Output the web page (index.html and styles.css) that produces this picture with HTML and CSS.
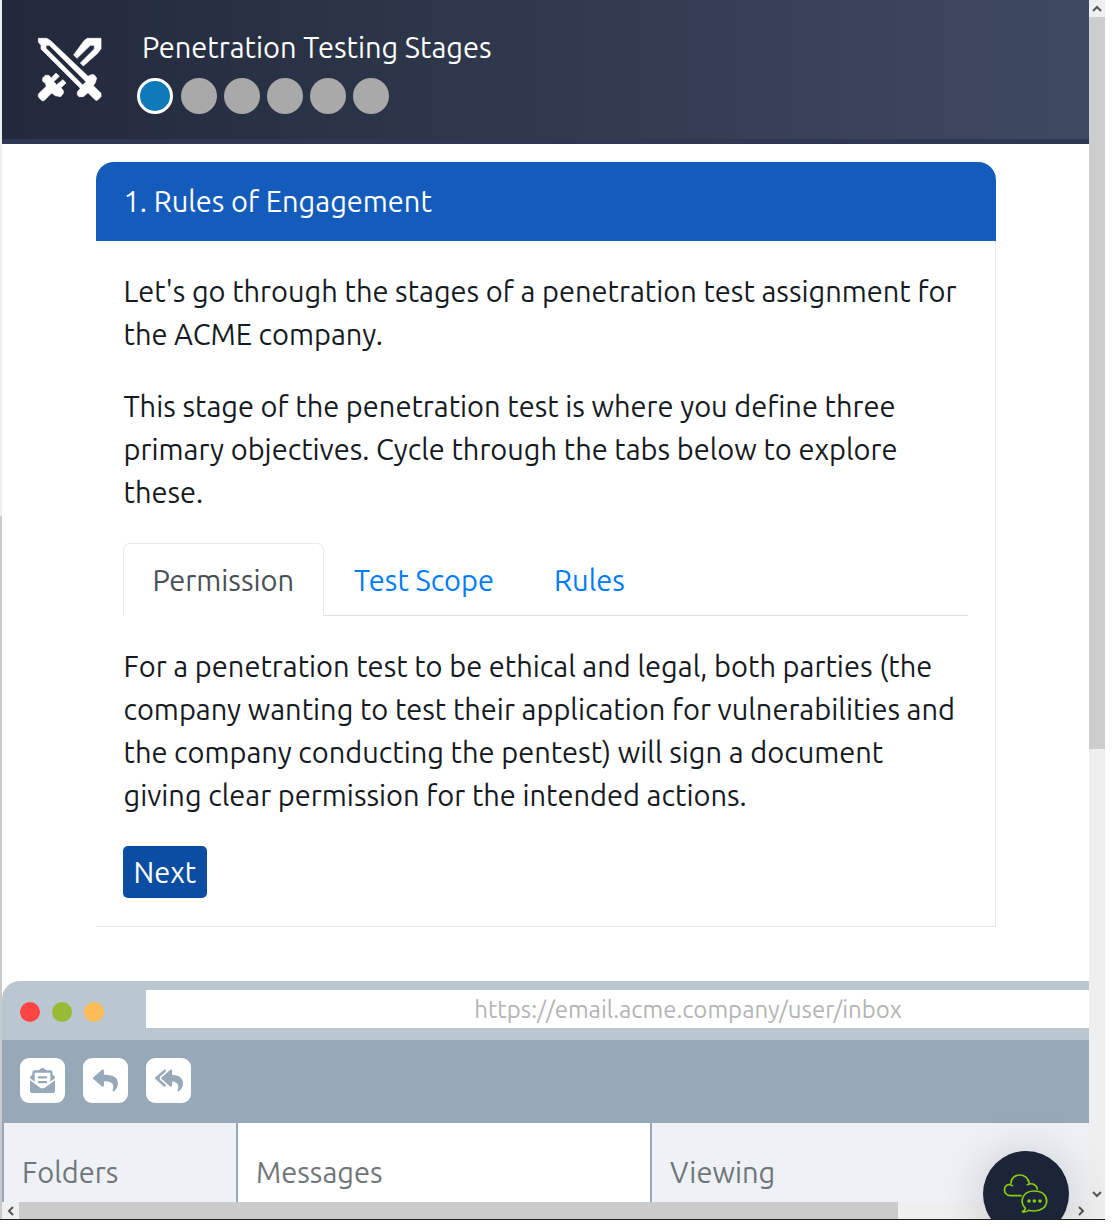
FILE: index.html
```html
<!DOCTYPE html>
<html lang="en">
<head>
<meta charset="utf-8">
<title>Penetration Testing Stages</title>
<link rel="stylesheet" href="styles.css">
</head>
<body>
<div class="frame">
  <div class="outer-track"><div class="outer-thumb"></div></div>
  <div class="view">
    <header class="banner">
      <svg class="swords" viewBox="0 0 216 216" fill="#fff" stroke="#fff" stroke-width="2" aria-hidden="true">
        <path fill-rule="evenodd" d="M13 13H38L50 20L162 127L172 122L180 122L188 132L184 146L178 155L201 178V188L190 199H185L162 176L148 188H135L130 182V174L139 163L21 45V34L13 24ZM36 34V43L146 153L156 143L46 34Z"/>
        <path d="M160 13H201V44L191 58L148 96L139 87L181 45V34H169L129 73L119 63L150 20Z"/>
        <path d="M66 117L76 127L59 143L68 152L87 137L96 147L81 161L88 170V178L80 188L64 185L53 177L30 200H24L13 189V180L37 157L34 148L26 142V132L34 124H44L52 132Z"/>
      </svg>
      <div class="banner-text">
        <h1 class="title">Penetration Testing Stages</h1>
        <ol class="steps">
          <li class="step step-current" aria-current="step"></li>
          <li class="step"></li>
          <li class="step"></li>
          <li class="step"></li>
          <li class="step"></li>
          <li class="step"></li>
        </ol>
      </div>
    </header>

    <section class="card">
      <h2 class="card-head">1. Rules of Engagement</h2>
      <div class="card-body">
        <p class="copy">Let's go through the stages of a penetration test assignment for the ACME company.</p>
        <p class="copy">This stage of the penetration test is where you define three primary objectives. Cycle through the tabs below to explore these.</p>
        <nav class="tabs">
          <a class="tab tab-active" href="#permission">Permission</a>
          <a class="tab" href="#scope">Test Scope</a>
          <a class="tab" href="#rules">Rules</a>
        </nav>
        <p class="copy" id="permission">For a penetration test to be ethical and legal, both parties (the company wanting to test their application for vulnerabilities and the company conducting the pentest) will sign a document giving clear permission for the intended actions.</p>
        <button class="next" type="button">Next</button>
      </div>
    </section>

    <section class="mail">
      <div class="address-bar">
        <div class="lights">
          <span class="light light-red"></span>
          <span class="light light-green"></span>
          <span class="light light-amber"></span>
        </div>
        <input class="url" type="text" aria-label="Address" value="https://email.acme.company/user/inbox" readonly>
      </div>
      <div class="toolbar">
        <button class="tool" type="button" aria-label="Open message"><svg viewBox="0 0 512 512"><path d="M176 216h160c8.84 0 16-7.16 16-16v-16c0-8.84-7.16-16-16-16H176c-8.84 0-16 7.16-16 16v16c0 8.84 7.16 16 16 16zm-16 80c0 8.84 7.16 16 16 16h160c8.84 0 16-7.16 16-16v-16c0-8.84-7.16-16-16-16H176c-8.84 0-16 7.16-16 16v16zm96 121.13c-16.42 0-32.84-5.06-46.86-15.19L0 250.86V464c0 26.51 21.49 48 48 48h416c26.51 0 48-21.49 48-48V250.86L302.86 401.94c-14.02 10.12-30.44 15.19-46.86 15.19zm237.61-254.18c-8.85-6.94-17.24-13.47-29.61-22.81V96c0-26.51-21.49-48-48-48h-77.55c-3.04-2.2-5.87-4.26-9.04-6.56C312.6 29.17 279.2-.35 256 0c-23.2-.35-56.59 29.17-73.41 41.44-3.17 2.3-6 4.36-9.04 6.56H96c-26.51 0-48 21.49-48 48v44.14c-12.37 9.33-20.76 15.87-29.61 22.81A47.995 47.995 0 0 0 0 200.72v10.65l96 69.35V96h320v184.72l96-69.35v-10.65c0-14.74-6.78-28.67-18.39-37.77z"/></svg></button>
        <button class="tool" type="button" aria-label="Reply"><svg viewBox="0 0 512 512"><path d="M8.309 189.836L184.313 37.851C199.719 24.546 224 35.347 224 56.015v80.053c160.629 1.839 288 34.032 288 186.258 0 61.441-39.581 122.309-83.333 154.132-13.653 9.931-33.111-2.533-28.077-18.631 45.344-145.012-21.507-183.51-176.59-185.742V360c0 20.7-24.3 31.453-39.687 18.164l-176.004-152c-11.071-9.562-11.086-26.753 0-36.328z"/></svg></button>
        <button class="tool" type="button" aria-label="Reply to all"><svg class="wide" viewBox="0 0 576 512"><path d="M136.309 189.836L312.313 37.851C327.72 24.546 352 35.348 352 56.015v82.763c129.182 10.231 224 52.212 224 183.548 0 61.441-39.582 122.309-83.333 154.132-13.653 9.931-33.111-2.533-28.077-18.631 38.512-123.162-3.922-169.482-112.59-182.015v84.175c0 20.701-24.3 31.453-39.687 18.164L136.309 226.164c-11.071-9.561-11.086-26.753 0-36.328zm-128 36.328L184.313 378.15C199.7 391.439 224 380.687 224 359.986v-15.818l-108.606-93.785A55.96 55.96 0 0 1 96 207.998a55.953 55.953 0 0 1 19.393-42.38L224 71.832V56.015c0-20.667-24.28-31.469-39.687-18.164L8.309 189.836c-11.086 9.575-11.071 26.767 0 36.328z"/></svg></button>
      </div>
      <div class="panes">
        <h3 class="pane pane-tint">Folders</h3>
        <h3 class="pane">Messages</h3>
        <h3 class="pane pane-tint">Viewing</h3>
      </div>
    </section>
  </div>

  <div class="vbar">
    <span class="arrow"><svg viewBox="0 0 10 10"><path d="M1 7L5 3L9 7"/></svg></span>
    <div class="vtrack"><div class="vthumb"></div></div>
    <span class="arrow"><svg viewBox="0 0 10 10"><path d="M1 3L5 7L9 3"/></svg></span>
  </div>
  <div class="hbar">
    <span class="arrow"><svg viewBox="0 0 10 10"><path d="M7 1L3 5L7 9"/></svg></span>
    <div class="htrack"><div class="hthumb"></div></div>
    <span class="arrow"><svg viewBox="0 0 10 10"><path d="M3 1L7 5L3 9"/></svg></span>
  </div>

  <button class="chat" type="button" aria-label="Open chat">
    <svg viewBox="9 9 258 258" fill="none" stroke="#88cc14" stroke-width="5" stroke-linecap="round" stroke-linejoin="round">
      <path d="M123 143H92C68 143 68 110 88 109C91 111 95 111 97 113M93 106C93 74 144 71 148 108M142 110C158 103 170 111 172 123"/>
      <path d="M136 181C118 163 125 129 163 129C188 129 200 143 200 159C200 178 182 189 163 189C152 189 148 188 146 187C140 191 132 193 127 191C133 188 136 184 136 181Z"/>
      <g fill="#88cc14" stroke="none"><circle cx="147" cy="159" r="5.5"/><circle cx="163" cy="159" r="5.5"/><circle cx="180" cy="159" r="5.5"/></g>
    </svg>
  </button>
</div>
</body>
</html>
```
FILE: styles.css
```css
* { box-sizing: border-box; }

body {
  margin: 0;
  padding: 0 9px 11px 0;
  background: #fff;
  color: #151a22;
  font: 400 29px/43px Ubuntu, "Noto Sans", sans-serif;
}

h1, h2, h3, p, ol {
  margin: 0;
  padding: 0;
  font: inherit;
}

button, input { font: inherit; border: 0; }

.frame {
  position: relative;
  display: grid;
  grid-template-columns: 2px minmax(0, 1fr) 16px;
  grid-template-rows: minmax(0, 1fr) 17px;
  height: calc(100vh - 11px);
  overflow: hidden;
  border-bottom: 1px solid #222;
  background: #efefef;
}

.outer-track {
  grid-row: 1 / 3;
  display: flex;
  flex-direction: column;
  justify-content: flex-end;
}

.outer-thumb { height: 57.7%; background: #cacaca; }

.view { overflow: hidden; background: #fff; }

/* Banner */
.banner {
  display: flex;
  align-items: center;
  gap: 31px;
  padding: 26px 32px 25px;
  border-bottom: 5px solid #2e3852;
  background: linear-gradient(90deg, #22293b, #3f4961);
  color: #fff;
}

.swords { width: 72px; height: 72px; }

.banner-text {
  display: flex;
  flex-direction: column;
  gap: 9px;
}

.title { padding-left: 5px; }

.steps {
  display: flex;
  gap: 7px;
  list-style: none;
}

.step {
  width: 36px;
  height: 36px;
  border-radius: 50%;
  background: #a9a9a9;
}

.step-current {
  margin-right: 1px;
  border: 3px solid #fff;
  background: #0f7aba;
}

/* Card */
.card {
  max-width: 900px;
  margin: 18px auto 54px;
}

.card-head {
  padding: 18px 28px;
  border-radius: 18px 18px 0 0;
  background: #145cbb;
  color: #fff;
}

.card-body {
  display: flex;
  flex-direction: column;
  align-items: flex-start;
  gap: 29px;
  padding: 29px 27px 28px;
  border: solid #eaeaea;
  border-width: 0 1px 1px 0;
}

.copy { padding: 0 3px 0 1px; }

.tabs {
  display: flex;
  align-self: stretch;
  border-bottom: 1px solid #dee2e6;
}

.tab {
  padding: 15px 29px 13px;
  margin-bottom: -1px;
  border: 1px solid transparent;
  border-radius: 7px 7px 0 0;
  color: #007bff;
  text-decoration: none;
}

.tab-active {
  border-color: #e8eaec;
  border-bottom-color: #fff;
  background: #fff;
  color: #495057;
}

.next {
  padding: 5px 11px 4px;
  border-radius: 5px;
  background: #0b4da2;
  color: #fff;
}

/* Mail client */
.mail { min-width: 1240px; }

.address-bar {
  display: flex;
  align-items: center;
  gap: 42px;
  padding: 9px 12px 12px 18px;
  border-radius: 18px 0 0 0;
  background: #bac6d0;
}

.lights { display: flex; gap: 12px; padding-top: 6px; }

.light { width: 20px; height: 20px; border-radius: 50%; }
.light-red { background: #f44; }
.light-green { background: #9b3; }
.light-amber { background: #fb5; }

.url {
  flex: 1;
  height: 38px;
  padding: 0;
  background: #fff;
  color: #b4b4b4;
  font-size: 24px;
  text-align: center;
}

.toolbar {
  display: flex;
  gap: 18px;
  padding: 18px 18px 20px;
  background: #97a8b8;
}

.tool {
  display: grid;
  place-items: center;
  width: 45px;
  height: 45px;
  padding: 0;
  border-radius: 9px;
  background: #fff;
}

.tool svg { width: 25px; height: 25px; fill: #97a8b8; }
.tool .wide { width: 28px; }

.panes {
  display: grid;
  grid-template-columns: 234px 414px 1fr;
}

.pane {
  min-height: 200px;
  padding: 28px 18px;
  border-left: 2px solid #97a8b8;
  color: #70757a;
}

.pane-tint { background: #eef2f6; }

/* Scrollbars */
.vbar, .hbar { display: flex; }
.vbar { grid-column: 3; grid-row: 1; flex-direction: column; }
.hbar { grid-column: 2; grid-row: 2; }

.arrow { display: grid; place-items: center; width: 17px; height: 17px; }
.vbar .arrow { width: 16px; }
.arrow svg { width: 10px; height: 10px; fill: none; stroke: #555; stroke-width: 2; }

.vtrack, .htrack { flex: 1; }
.vthumb { height: 62.7%; background: #cdcdcd; }
.hthumb { width: 83.5%; height: 100%; background: #cbcbcb; }

/* Floating chat launcher */
.chat {
  position: absolute;
  right: 36px;
  bottom: -18px;
  width: 86px;
  height: 86px;
  padding: 0;
  border-radius: 50%;
  background: #1c2538;
  box-shadow: 0 4px 50px rgba(0, 0, 0, .18);
}

.chat svg { display: block; width: 86px; height: 86px; }
```
